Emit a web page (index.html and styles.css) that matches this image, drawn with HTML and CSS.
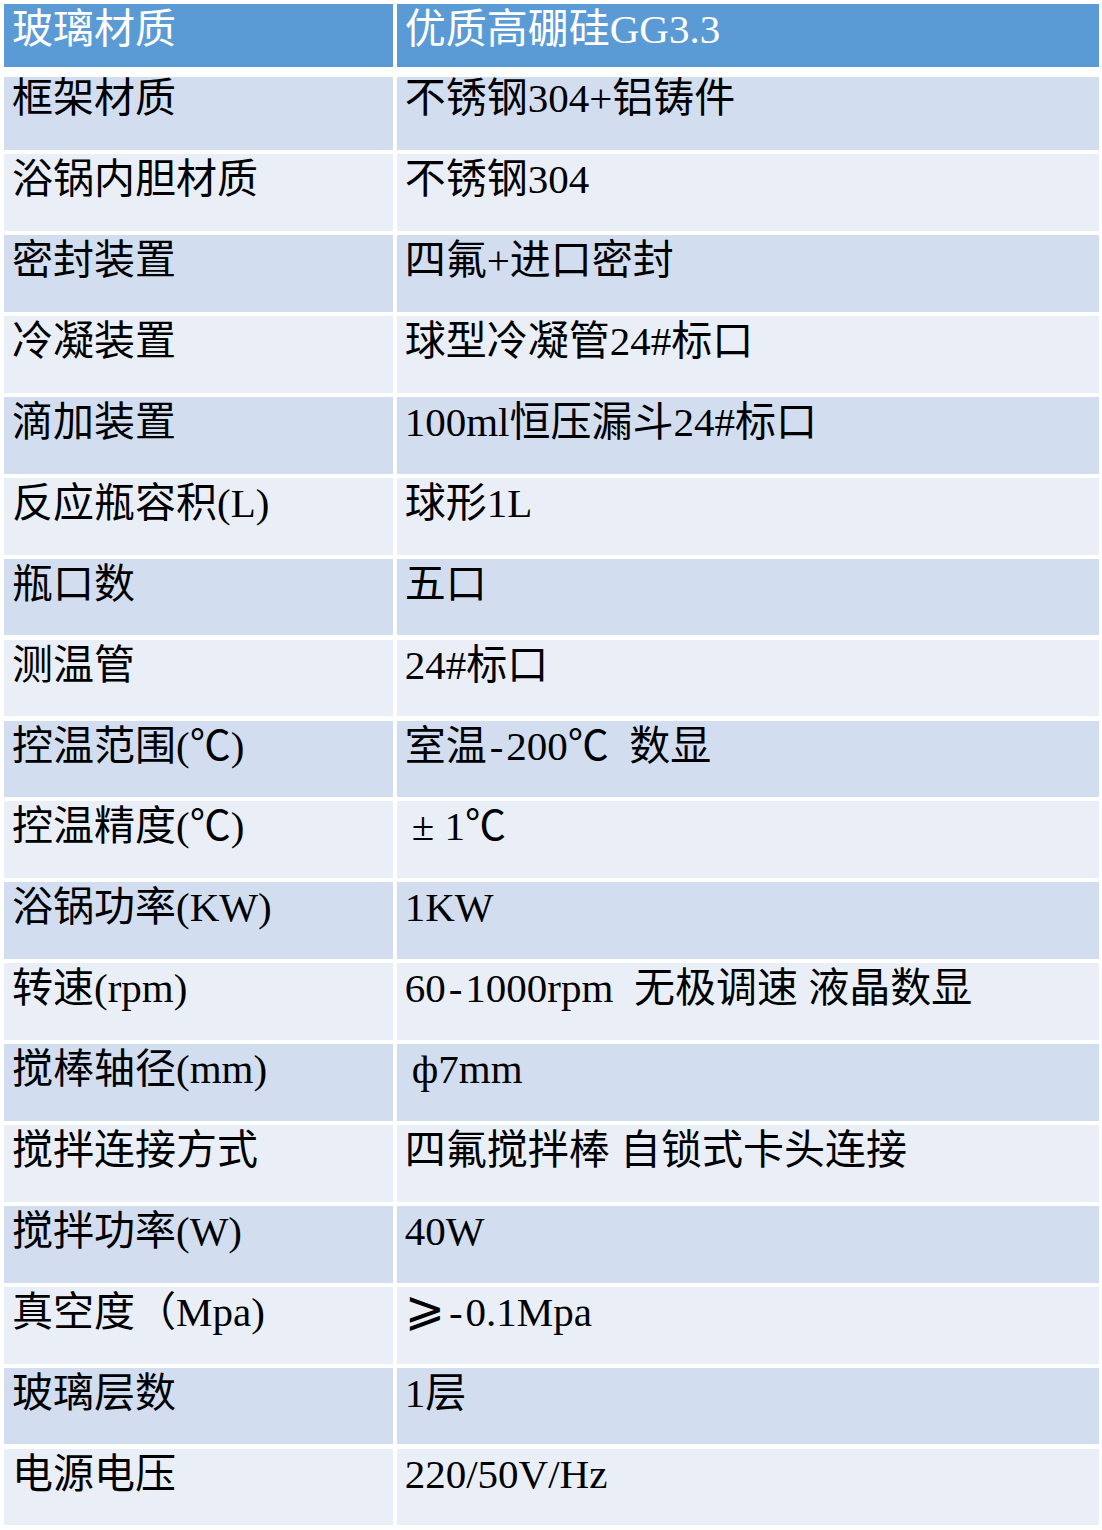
FILE: index.html
```html
<!DOCTYPE html>
<html lang="zh-CN">
<head>
<meta charset="utf-8">
<title>参数表</title>
<link rel="stylesheet" href="styles.css">
</head>
<body>
<div class="table">
  <div class="row head"><div class="cell">玻璃材质</div><div class="cell">优质高硼硅GG3.3</div></div>
  <div class="row odd first"><div class="cell">框架材质</div><div class="cell">不锈钢304+铝铸件</div></div>
  <div class="row even"><div class="cell">浴锅内胆材质</div><div class="cell">不锈钢304</div></div>
  <div class="row odd"><div class="cell">密封装置</div><div class="cell">四氟+进口密封</div></div>
  <div class="row even"><div class="cell">冷凝装置</div><div class="cell">球型冷凝管24#标口</div></div>
  <div class="row odd"><div class="cell">滴加装置</div><div class="cell">100ml恒压漏斗24#标口</div></div>
  <div class="row even"><div class="cell">反应瓶容积(L)</div><div class="cell">球形1L</div></div>
  <div class="row odd"><div class="cell">瓶口数</div><div class="cell">五口</div></div>
  <div class="row even"><div class="cell">测温管</div><div class="cell">24#标口</div></div>
  <div class="row odd"><div class="cell">控温范围(℃)</div><div class="cell">室温<span class="hy">-</span>200℃&nbsp; 数显</div></div>
  <div class="row even"><div class="cell">控温精度(℃)</div><div class="cell"><span class="ind">±</span> 1℃</div></div>
  <div class="row odd"><div class="cell">浴锅功率(KW)</div><div class="cell">1KW</div></div>
  <div class="row even"><div class="cell">转速(rpm)</div><div class="cell">60<span class="hy">-</span>1000rpm&nbsp; 无极调速 液晶数显</div></div>
  <div class="row odd"><div class="cell">搅棒轴径(mm)</div><div class="cell"><span class="ind">ф</span>7mm</div></div>
  <div class="row even"><div class="cell">搅拌连接方式</div><div class="cell">四氟搅拌棒 自锁式卡头连接</div></div>
  <div class="row odd"><div class="cell">搅拌功率(W)</div><div class="cell">40W</div></div>
  <div class="row even"><div class="cell">真空度（Mpa)</div><div class="cell"><span class="ge">⩾</span><span class="hy">-</span>0.1Mpa</div></div>
  <div class="row odd"><div class="cell">玻璃层数</div><div class="cell">1层</div></div>
  <div class="row even"><div class="cell">电源电压</div><div class="cell">220/50V/Hz</div></div>
</div>
</body>
</html>
```
FILE: styles.css
```css
html, body {
  margin: 0;
  padding: 0;
  background: #ffffff;
}
body {
  font-family: "Liberation Serif", "Noto Sans CJK SC", serif;
  font-size: 41px;
  font-weight: 400;
  color: #000000;
}
.table {
  padding: 4px 3px 4px 4px;
  display: flex;
  flex-direction: column;
  gap: 4.27px;
}
.row {
  display: grid;
  grid-template-columns: 389px 702px;
  column-gap: 3.7px;
  height: 76.65px;
}
.row.head {
  height: 62.7px;
  margin-bottom: 5.73px;
  color: #ffffff;
}
.row.first {
  height: 73.3px;
}
.cell {
  padding: 5px 8px 0 8px;
  line-height: 41px;
  white-space: nowrap;
}
.row.first .cell {
  padding-top: 1.5px;
}
.row.head .cell {
  background: #5b9bd5;
  padding-top: 5px;
}
.row.odd .cell {
  background: #d2deef;
}
.row.even .cell {
  background: #eaeff7;
}
.ind {
  display: inline-block;
  margin-left: 7px;
}
.hy {
  display: inline-block;
  margin: 0 3px;
}
.ge {
  font-family: "DejaVu Serif", "DejaVu Sans", serif;
  font-size: 48px;
  line-height: 0;
  vertical-align: 1px;
  margin-right: 1px;
}
```
